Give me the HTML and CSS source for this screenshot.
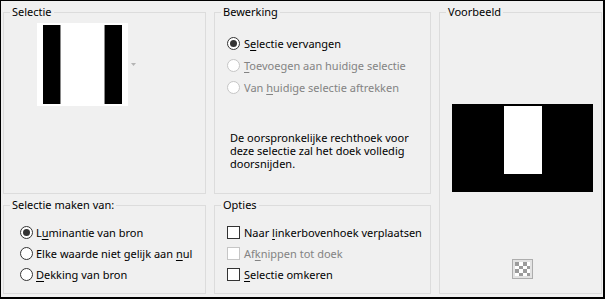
FILE: index.html
```html
<!DOCTYPE html>
<html lang="nl">
<head>
    <meta charset="UTF-8">
    <title>Selectie maken</title>
    <link rel="stylesheet" href="styles.css">
</head>
<body>

<div class="window">
    <div class="group sel">
        <div class="title">Selectie</div>
        <div class="sel-preview">
            <svg width="91" height="83" viewBox="0 0 91 83">
                <rect width="91" height="83" fill="#fff"/>
                <rect x="6" y="2" width="17" height="79" fill="#000"/>
                <rect x="23" y="2" width="1" height="79" fill="#8a8a8a"/>
                <rect x="67" y="2" width="1" height="79" fill="#8a8a8a"/>
                <rect x="68" y="2" width="17" height="79" fill="#000"/>
            </svg>
            <svg class="arrow" width="5" height="3" viewBox="0 0 5 3">
                <path d="M0 0H5L2.5 3Z" fill="#b4b4b4"/>
            </svg>
        </div>
    </div>

    <div class="group bew">
        <div class="title">Bewerking</div>
        <div class="list">
            <div class="row"><span class="radio checked"></span><span>S<u>e</u>lectie vervangen</span></div>
            <div class="row disabled"><span class="radio"></span><span><u>T</u>oevoegen aan huidige selectie</span></div>
            <div class="row disabled"><span class="radio"></span><span>Van <u>h</u>uidige selectie aftrekken</span></div>
        </div>
        <p class="desc">De oorspronkelijke rechthoek voor deze selectie zal het doek volledig doorsnijden.</p>
    </div>

    <div class="group voor">
        <div class="title">Voorbeeld</div>
        <svg class="voor-preview" width="141" height="88" viewBox="0 0 141 88">
            <rect width="141" height="88" fill="#000"/>
            <rect x="52" y="2" width="38" height="68" fill="#fff"/>
        </svg>
        <svg class="checker" width="21" height="20" viewBox="0 0 21 20">
            <rect x="0.5" y="0.5" width="20" height="19" fill="#e3e3e3" stroke="#adadad"/>
            <rect x="3" y="3" width="15" height="14" fill="#fff"/>
            <rect x="3" y="3" width="4" height="4" fill="#9c9c9c"/>
            <rect x="11" y="3" width="4" height="4" fill="#9c9c9c"/>
            <rect x="7" y="7" width="4" height="3" fill="#9c9c9c"/>
            <rect x="15" y="7" width="3" height="3" fill="#9c9c9c"/>
            <rect x="3" y="10" width="4" height="4" fill="#9c9c9c"/>
            <rect x="11" y="10" width="4" height="4" fill="#9c9c9c"/>
            <rect x="7" y="14" width="4" height="3" fill="#9c9c9c"/>
            <rect x="15" y="14" width="3" height="3" fill="#9c9c9c"/>
        </svg>
    </div>

    <div class="group maken">
        <div class="title">Selectie maken van:</div>
        <div class="list">
            <div class="row"><span class="radio checked"></span><span>L<u>u</u>minantie van bron</span></div>
            <div class="row"><span class="radio"></span><span>Elke waarde niet gelijk aan <u>n</u>ul</span></div>
            <div class="row"><span class="radio"></span><span><u>D</u>ekking van bron</span></div>
        </div>
    </div>

    <div class="group opties">
        <div class="title">Opties</div>
        <div class="list">
            <div class="row"><span class="check"></span><span>Naar <u>l</u>inkerbovenhoek verplaatsen</span></div>
            <div class="row disabled"><span class="check"></span><span>Af<u>k</u>nippen tot doek</span></div>
            <div class="row"><span class="check"></span><span><u>S</u>electie omkeren</span></div>
        </div>
    </div>
</div>

</body>
</html>
```

FILE: styles.css
```css
body {
    margin: 0;
    font-family: "Noto Sans", Arial, sans-serif;
    font-size: 11px;
    color: #000;
}
.window {
    width: 605px;
    height: 299px;
    box-sizing: border-box;
    border-style: solid;
    border-color: #000;
    border-width: 1px 2px 2px 1px;
    padding: 11px 1px 3px 2px;
    background: #f0f0f0;
    display: grid;
    grid-template-columns: 203px 217px 163px;
    grid-template-rows: 182px 89px;
    column-gap: 8px;
    row-gap: 11px;
    grid-template-areas:
        "sel bew voor"
        "maken opties voor";
}
.group {
    border: 1px solid #dcdcdc;
    min-width: 0;
}
.sel { grid-area: sel; }
.bew { grid-area: bew; }
.voor { grid-area: voor; }
.maken { grid-area: maken; }
.opties { grid-area: opties; }

.title {
    width: fit-content;
    margin: -9px 0 0 6px;
    padding: 0 2px;
    line-height: 16px;
    background: #f0f0f0;
}
.sel-preview {
    display: flex;
    align-items: center;
    margin: 3px 0 0 33px;
}
.sel-preview svg { display: block; }
.arrow { margin-left: 3px; }

.list {
    margin-top: 12px;
    padding-left: 12px;
}
.maken .list {
    margin-top: 9px;
    padding-left: 16px;
}
.row {
    display: flex;
    align-items: center;
    height: 22px;
    white-space: nowrap;
}
.maken .row, .opties .row {
    height: 21px;
}
.opties .list { margin-top: 9px; }
.row u { text-decoration-thickness: 1px; text-underline-offset: 2px; }
.radio, .check {
    width: 11px;
    height: 11px;
    border: 1px solid #333;
    background: #fff;
    margin-right: 4px;
    flex: none;
    position: relative;
}
.radio { border-radius: 50%; }
.radio.checked::after {
    content: "";
    position: absolute;
    left: 2px;
    top: 2px;
    width: 7px;
    height: 7px;
    border-radius: 50%;
    background: #333;
}
.maken .radio { margin-right: 3px; }
.disabled { color: #838383; }
.disabled .radio, .disabled .check {
    border-color: #c6c6c6;
}
.desc {
    margin: 33px 0 0 15px;
    width: 190px;
    line-height: 13px;
}
.voor-preview {
    display: block;
    margin: 84px 0 0 12px;
}
.checker {
    display: block;
    margin: 67px 0 0 72px;
}
```
